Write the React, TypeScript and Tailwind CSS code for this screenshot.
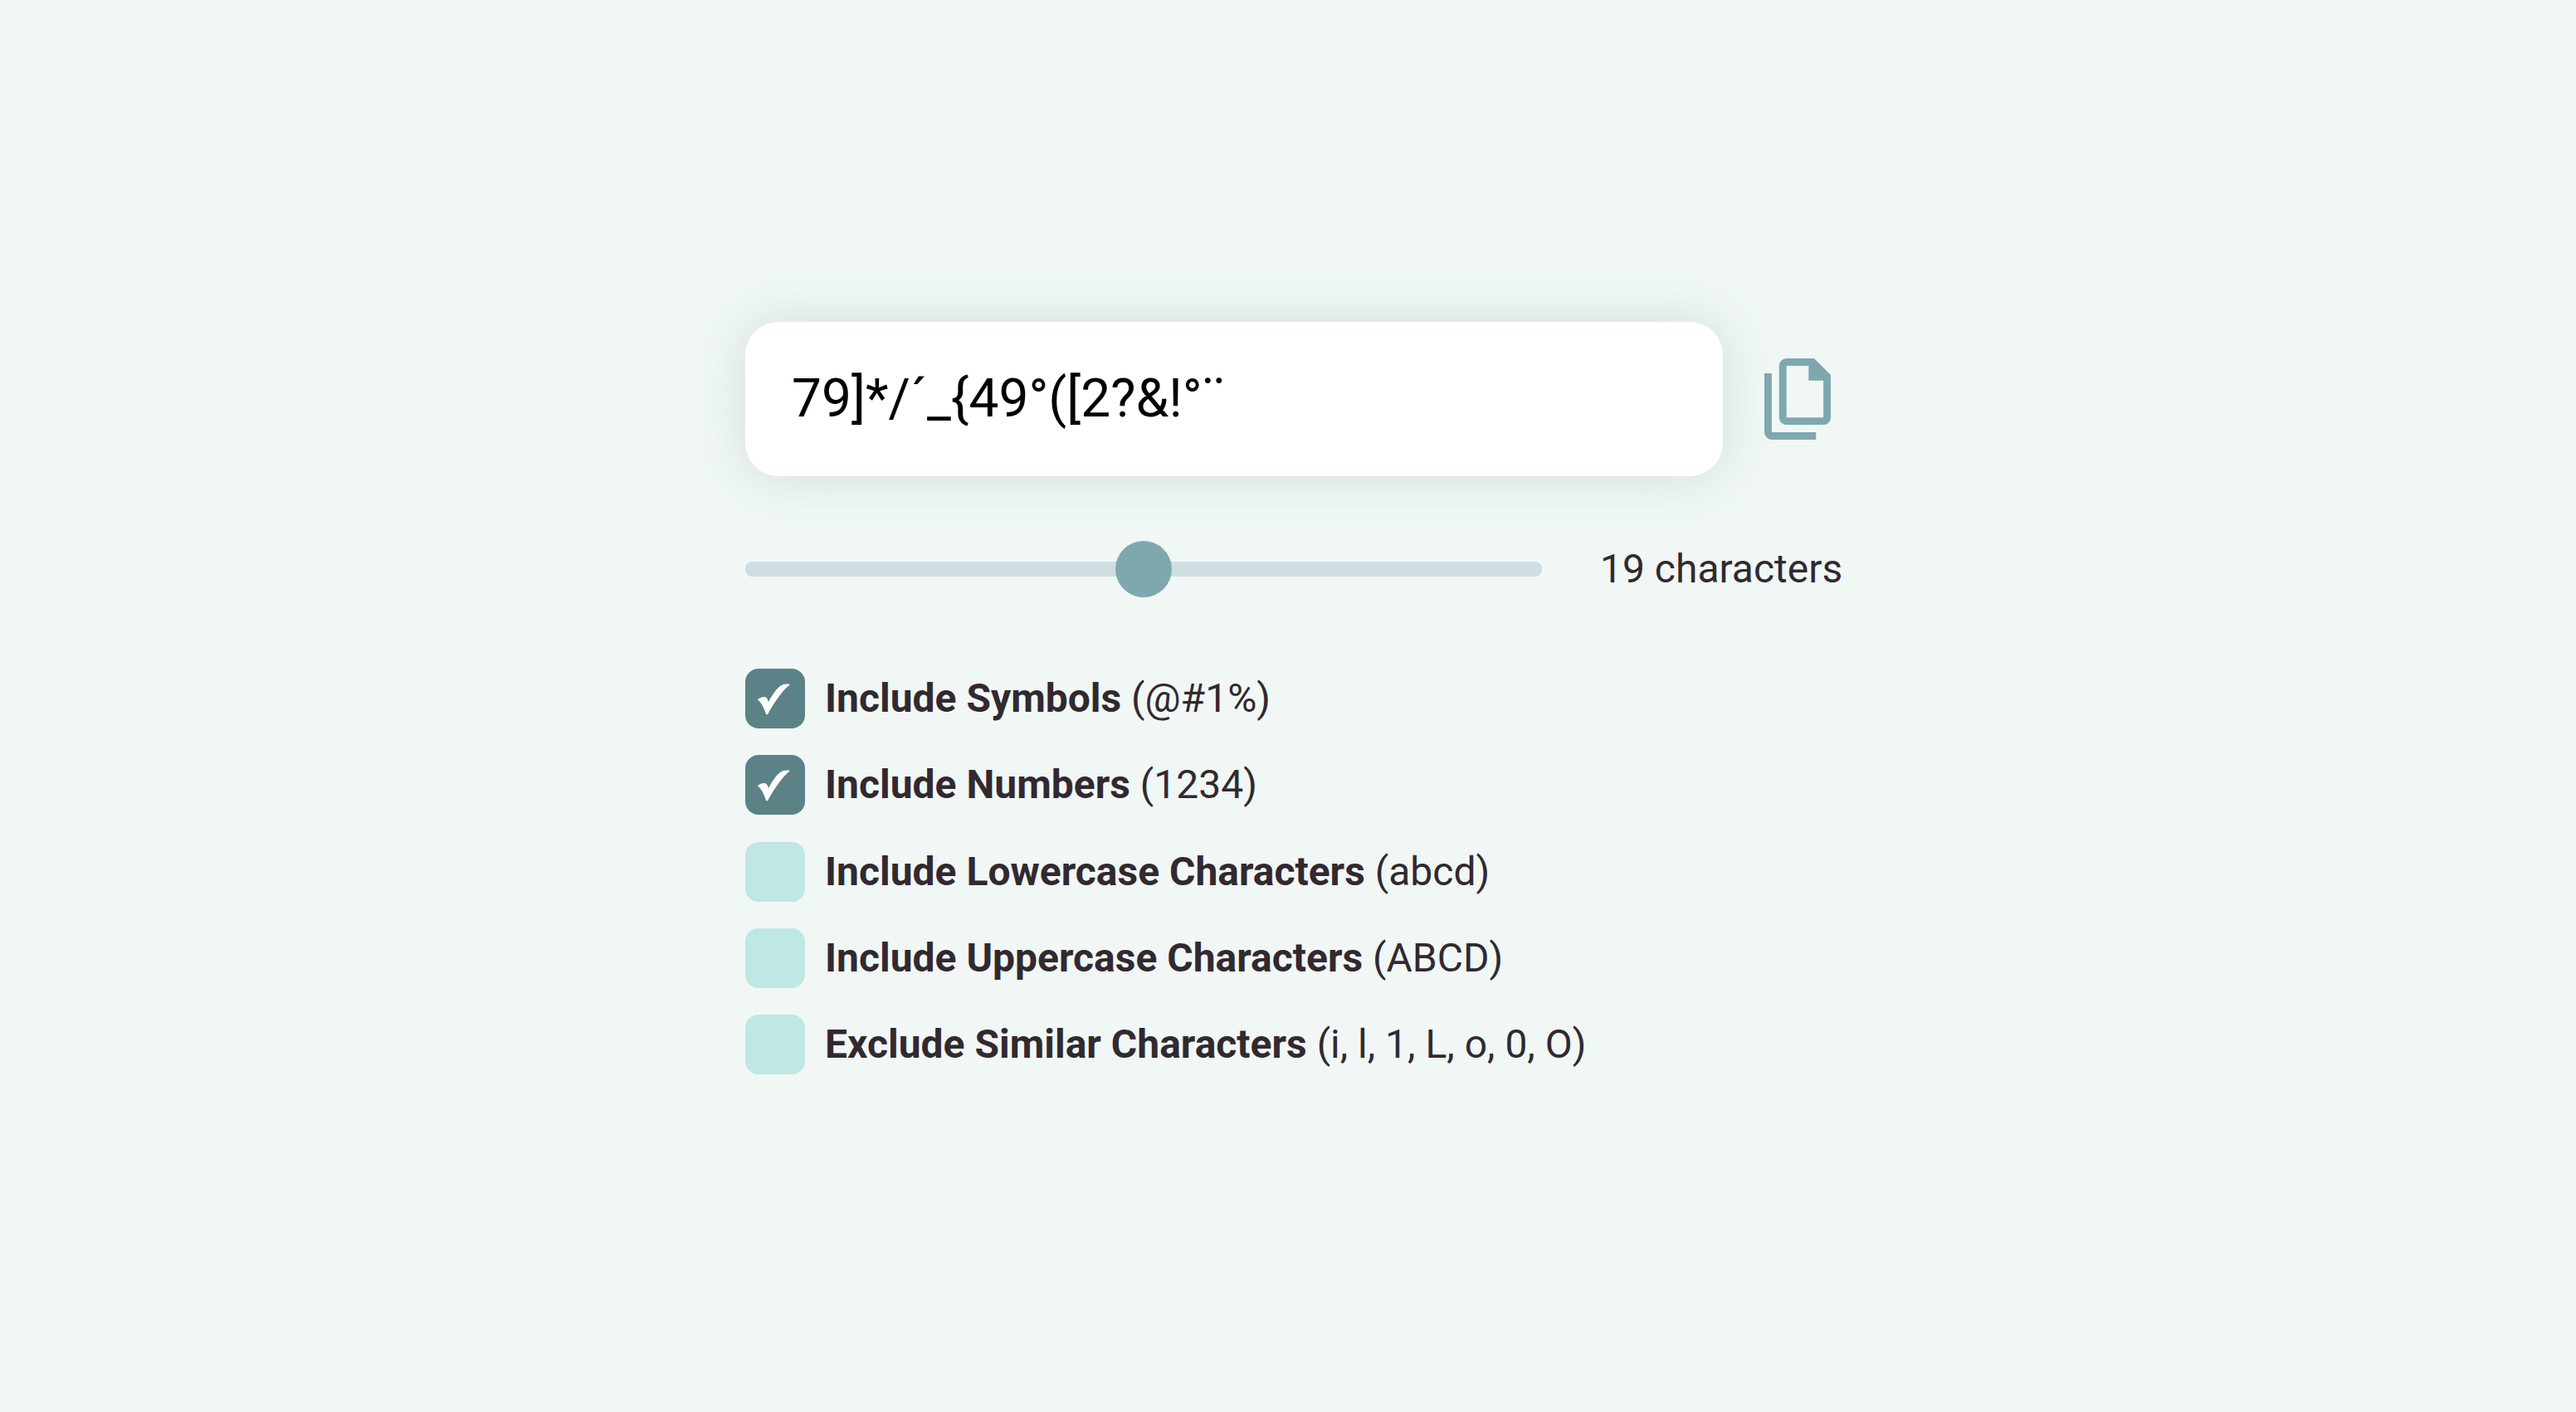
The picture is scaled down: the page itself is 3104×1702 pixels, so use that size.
import { useState } from "react"

interface OptionProps {
    label: string
    example: string
    checked: boolean
    onChange: () => void
}

const MIN_LENGTH = 8
const MAX_LENGTH = 30

const OPTIONS = [
    { id: "symbols", label: "Include Symbols", example: "(@#1%)" },
    { id: "numbers", label: "Include Numbers", example: "(1234)" },
    { id: "lowercase", label: "Include Lowercase Characters", example: "(abcd)" },
    { id: "uppercase", label: "Include Uppercase Characters", example: "(ABCD)" },
    { id: "similar", label: "Exclude Similar Characters", example: "(i, l, 1, L, o, 0, O)" },
]

const CopyIcon = () => (
    <svg viewBox="0 0 9 11" className="w-[80px] h-[98px] fill-[#7fa8ae]">
        <path d="M0 2H1V10H7V11H1A1 1 0 0 1 0 10Z" />
        <path fillRule="evenodd" d="M3 0H6.75L9 2.25V8A1 1 0 0 1 8 9H3A1 1 0 0 1 2 8V1A1 1 0 0 1 3 0ZM3 1V8H8V3H6V1Z" />
    </svg>
)

const CheckIcon = () => (
    <svg viewBox="0 0 216 216" className="size-full fill-white">
        <path d="M44 112C52 105 61 101 69 102C77 103 81 108 84 121C98 94 112 74 126 63C136 56 148 54 162 57C138 76 108 116 82 164C79 166 77 166 75 164C66 138 57 121 44 112Z" />
    </svg>
)

const Option = ({label, example, checked, onChange}: OptionProps) => {
    return (
        <label className="flex items-center gap-6 h-[72px] cursor-pointer whitespace-nowrap">
            <input type="checkbox" className="sr-only" checked={checked} onChange={onChange} />
            <span className={`size-[72px] shrink-0 rounded-2xl ${checked ? "bg-[#5c8287]" : "bg-[#bfe7e3]"}`}>
                { checked && <CheckIcon /> }
            </span>
            <span className="text-[48px] leading-[72px]">
                <b className="font-bold">{ label }</b> { example }
            </span>
        </label>
    )
}

const App = () => {
    const [length, setLength] = useState(19)
    const [selected, setSelected] = useState(["symbols", "numbers"])

    const toggle = (id: string) => {
        setSelected(selected.includes(id) ? selected.filter((item) => item !== id) : [...selected, id])
    }

    return (
        <main className="min-h-screen bg-[#f0f7f5] pt-[388px] font-[Roboto,sans-serif] text-[#32292f]">
            <div className="w-[1308px] mx-auto">
                <div className="flex items-center justify-between">
                    <div className="w-[1178px] h-[186px] px-14 flex items-center rounded-[40px] bg-white text-black text-[64px] shadow-[0_0_60px_#d0ddd9]">
                        {"79]*/´_{49°([2?&!°¨"}
                    </div>
                    <button type="button" aria-label="Copy">
                        <CopyIcon />
                    </button>
                </div>

                <div className="mt-[76px] h-[72px] flex items-center gap-[70px] whitespace-nowrap">
                    <input
                        type="range"
                        min={MIN_LENGTH}
                        max={MAX_LENGTH}
                        value={length}
                        onChange={(e) => setLength(Number(e.target.value))}
                        className="w-[960px] h-[18px] shrink-0 appearance-none rounded-lg bg-[#cfdee2] [&::-webkit-slider-thumb]:appearance-none [&::-webkit-slider-thumb]:size-[68px] [&::-webkit-slider-thumb]:rounded-full [&::-webkit-slider-thumb]:bg-[#7fa8ae]"
                    />
                    <span className="text-[48px] leading-[72px]">{ length } characters</span>
                </div>

                <div className="mt-[84px] flex flex-col gap-[32.3px]">
                    { OPTIONS.map(({id, label, example}) => (
                        <Option key={id} label={label} example={example} checked={selected.includes(id)} onChange={() => toggle(id)} />
                    )) }
                </div>
            </div>
        </main>
    )
}

export default App
